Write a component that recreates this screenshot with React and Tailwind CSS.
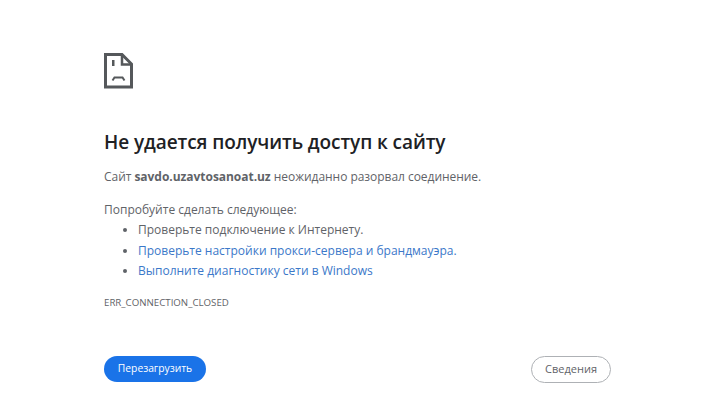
export default function App() {
  return (
    <div className="w-[720px] h-[417px] bg-white overflow-hidden flex flex-col pl-[104px] pr-[109px] pt-[52px] font-['Open_Sans','Noto_Sans',sans-serif] text-[#5f6368]">
      <svg width="30" height="38" viewBox="0 0 30 38" className="block shrink-0">
        <path d="M1.5 2.5H18L27.5 12V35H1.5Z" fill="none" stroke="#55585b" strokeWidth="3" strokeLinejoin="miter" />
        <path d="M18 3V12.5H27" fill="none" stroke="#55585b" strokeWidth="2.5" />
        <rect x="8" y="8" width="2.5" height="6" fill="#55585b" />
        <path d="M8.5 28.5L10.5 25.5H18.5L20.5 28.5" fill="none" stroke="#55585b" strokeWidth="2" />
      </svg>
      <h1 className="mt-[38px] text-[19px] leading-[28px] font-semibold tracking-[-0.08px] text-[#202124]">Не удается получить доступ к сайту</h1>
      <p className="mt-[11px] text-[12px] tracking-[-0.04px] leading-[20px]">Сайт <b className="font-bold">savdo.uzavtosanoat.uz</b> неожиданно разорвал соединение.</p>
      <p className="mt-[13px] text-[12px] leading-[20px]">Попробуйте сделать следующее:</p>
      <ul className="text-[12px] leading-[20.5px] list-disc pl-[34px]">
        <li>Проверьте подключение к Интернету.</li>
        <li className="text-[#3b78c9] marker:text-[#5f6368]">Проверьте настройки прокси-сервера и брандмауэра.</li>
        <li className="text-[#3b78c9] marker:text-[#5f6368]">Выполните диагностику сети в Windows</li>
      </ul>
      <p className="mt-[13px] text-[9.7px] leading-[16px]">ERR_CONNECTION_CLOSED</p>
      <div className="mt-[45px] flex justify-between items-center">
        <button className="h-[26px] w-[102px] rounded-full bg-[#1a73e8] text-white text-[10.3px] font-medium">Перезагрузить</button>
        <button className="h-[27px] w-[80px] rounded-full border border-[#aeb1b5] bg-white text-[#5f6368] text-[11px] font-medium">Сведения</button>
      </div>
    </div>
  );
}
